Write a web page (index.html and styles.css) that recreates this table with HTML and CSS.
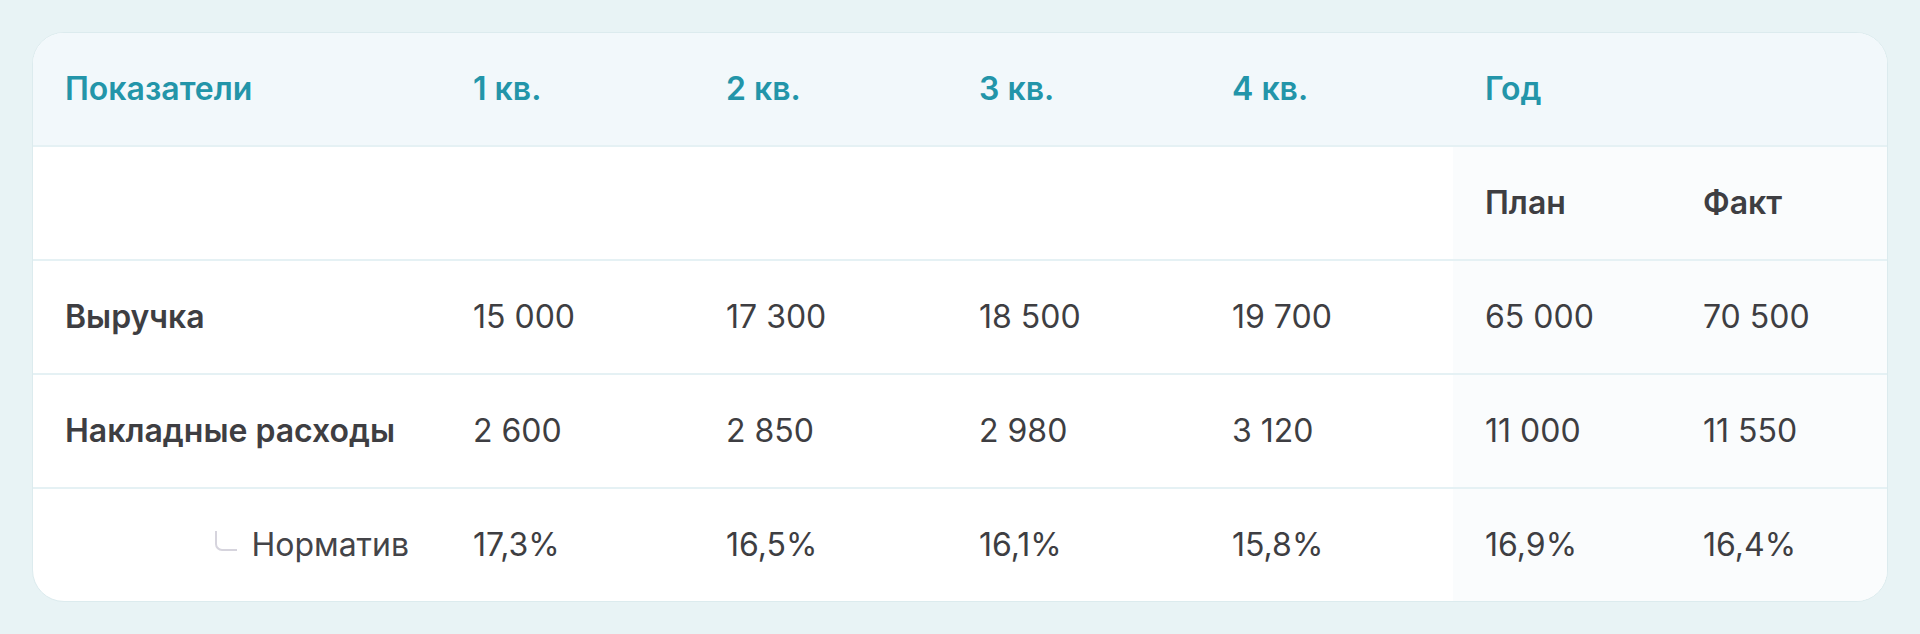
FILE: index.html
```html
<!DOCTYPE html>
<html lang="ru">
<head>
  <meta charset="UTF-8" />
  <meta name="viewport" content="width=device-width, initial-scale=1" />
  <title>Показатели по кварталам</title>
  <link rel="stylesheet" href="styles.css">
</head>
<body>
  <div class="cartao">
    <table class="tabela">
      <colgroup>
        <col class="col-nome">
        <col class="col-kv">
        <col class="col-kv">
        <col class="col-kv">
        <col class="col-kv">
        <col class="col-plan">
        <col class="col-fakt">
      </colgroup>
      <thead>
        <tr class="topo">
          <th>Показатели</th>
          <th>1 кв.</th>
          <th>2 кв.</th>
          <th>3 кв.</th>
          <th>4 кв.</th>
          <th colspan="2">Год</th>
        </tr>
        <tr class="sub">
          <th></th>
          <th></th>
          <th></th>
          <th></th>
          <th></th>
          <th class="ano">План</th>
          <th class="ano">Факт</th>
        </tr>
      </thead>
      <tbody>
        <tr>
          <td class="nome">Выручка</td>
          <td>15 000</td>
          <td>17 300</td>
          <td>18 500</td>
          <td>19 700</td>
          <td class="ano">65 000</td>
          <td class="ano">70 500</td>
        </tr>
        <tr>
          <td class="nome">Накладные расходы</td>
          <td>2 600</td>
          <td>2 850</td>
          <td>2 980</td>
          <td>3 120</td>
          <td class="ano">11 000</td>
          <td class="ano">11 550</td>
        </tr>
        <tr>
          <td class="filho"><span class="ramo"></span>Норматив</td>
          <td>17,3%</td>
          <td>16,5%</td>
          <td>16,1%</td>
          <td>15,8%</td>
          <td class="ano">16,9%</td>
          <td class="ano">16,4%</td>
        </tr>
      </tbody>
    </table>
  </div>
</body>
</html>
```

FILE: styles.css
```css
html, body {
  margin: 0;
  padding: 0;
  background: #e8f3f5;
  font-family: Inter, 'Noto Sans', sans-serif;
}

body {
  padding: 32px;
}

.cartao {
  background: #fff;
  border: 1px solid #dcebee;
  border-radius: 32px;
  overflow: hidden;
}

.tabela {
  width: 100%;
  table-layout: fixed;
  border-collapse: separate;
  border-spacing: 0;
  font-size: 32px;
  line-height: 48px;
  color: #3e3e42;
}

.col-nome { width: 408px; }
.col-kv { width: 253px; }
.col-plan { width: 218px; }
.col-fakt { width: 217px; }

.tabela th,
.tabela td {
  padding: 32px 32px;
  text-align: left;
  white-space: nowrap;
  border-bottom: 2px solid #e5f1f4;
}

.tabela tbody tr:last-child td {
  border-bottom: none;
}

.topo th {
  background: #f2f8fb;
  color: #2395a9;
  font-weight: 600;
}

.sub th {
  font-weight: 600;
}

.tabela .ano {
  background: #fafcfd;
}

.tabela td {
  font-weight: 400;
}

.tabela td.nome {
  font-weight: 600;
}

.tabela td.filho {
  text-align: right;
  color: #444448;
}

.ramo {
  display: inline-block;
  width: 20px;
  height: 18px;
  border-left: 2px solid #d6d4dd;
  border-bottom: 2px solid #d6d4dd;
  border-bottom-left-radius: 7px;
  margin: 0 14px 5px 0;
}
```
